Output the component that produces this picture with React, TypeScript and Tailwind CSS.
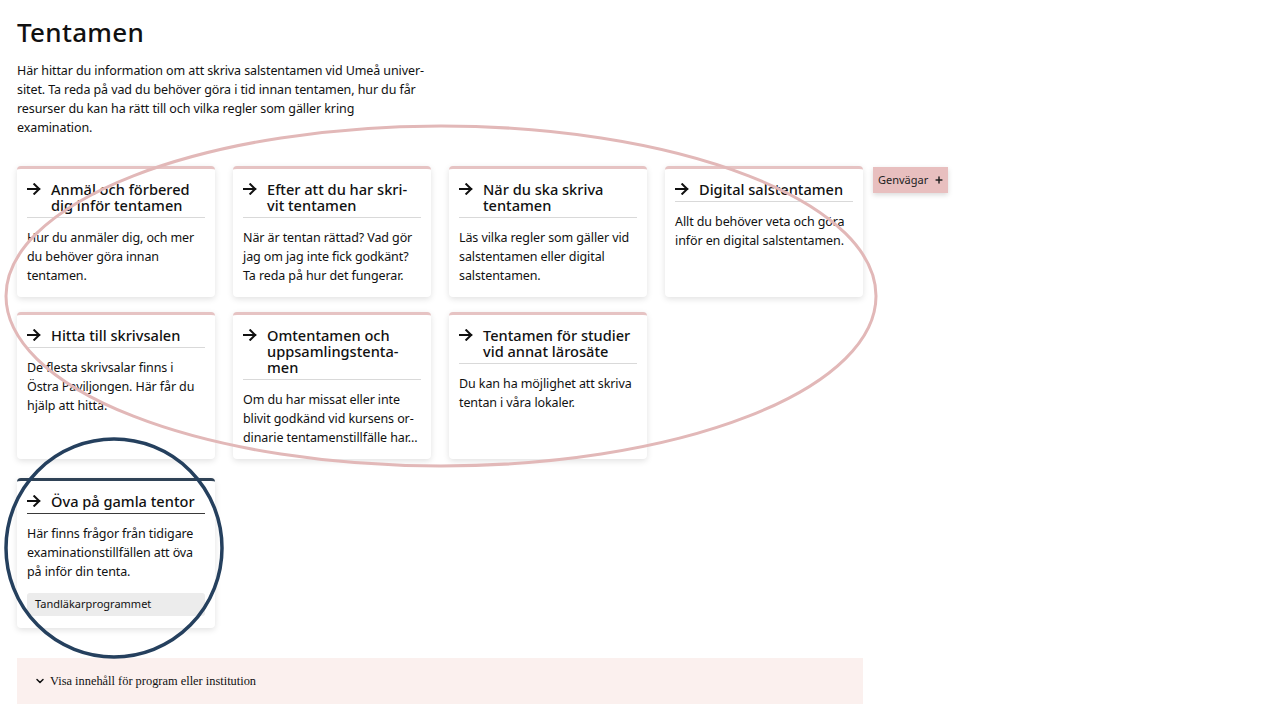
import { ChevronDown, Plus } from "lucide-react";

type Card = {
	title: string[];
	body: string[];
	tag?: string;
	dark?: boolean;
};

const CARDS: Card[] = [
	{
		title: ["Anmäl och förbered", "dig inför tentamen"],
		body: ["Hur du anmäler dig, och mer", "du behöver göra innan", "tentamen."],
	},
	{
		title: ["Efter att du har skri-", "vit tentamen"],
		body: ["När är tentan rättad? Vad gör", "jag om jag inte fick godkänt?", "Ta reda på hur det fungerar."],
	},
	{
		title: ["När du ska skriva", "tentamen"],
		body: ["Läs vilka regler som gäller vid", "salstentamen eller digital", "salstentamen."],
	},
	{
		title: ["Digital salstentamen"],
		body: ["Allt du behöver veta och göra", "inför en digital salstentamen."],
	},
	{
		title: ["Hitta till skrivsalen"],
		body: ["De flesta skrivsalar finns i", "Östra Paviljongen. Här får du", "hjälp att hitta."],
	},
	{
		title: ["Omtentamen och", "uppsamlingstenta-", "men"],
		body: ["Om du har missat eller inte", "blivit godkänd vid kursens or-", "dinarie tentamenstillfälle har..."],
	},
	{
		title: ["Tentamen för studier", "vid annat lärosäte"],
		body: ["Du kan ha möjlighet att skriva", "tentan i våra lokaler."],
	},
];

const LAST: Card = {
	title: ["Öva på gamla tentor"],
	body: ["Här finns frågor från tidigare", "examinationstillfällen att öva", "på inför din tenta."],
	tag: "Tandläkarprogrammet",
	dark: true,
};

// heavier arrow than lucide's, like the site's own
function Arrow() {
	return (
		<svg viewBox="0 0 14 12" className="mt-[2px] h-[12px] w-[14px] shrink-0" fill="none">
			<path
				d="M1 6h11.3M7.3 1.2 12.2 6l-4.9 4.8"
				stroke="currentColor"
				strokeWidth="2"
				strokeLinecap="square"
			/>
		</svg>
	);
}

function LinkCard({ card }: { card: Card }) {
	return (
		<a
			href="#"
			className={
				"flex flex-col rounded-[4px] border-t-[3px] bg-white px-[10px] pb-[12px] pt-[12px] text-[#111] shadow-[0_2px_6px_rgba(0,0,0,0.12)] " +
				(card.dark ? "border-[#2f4256]" : "border-[#e6c3c3]")
			}
		>
			<div
				className={
					"flex gap-x-[10px] border-b pb-[4px] " +
					(card.dark ? "border-[#3a3a3a]" : "border-[#d9d9d9]")
				}
			>
				<Arrow />
				<h2 className="text-[14.6px] font-medium leading-[16px] whitespace-nowrap">
					{card.title.map((line, i) => (
						<span key={i} className="block">
							{line}
						</span>
					))}
				</h2>
			</div>

			<p className="mt-[10px] text-[12.5px] leading-[19px] tracking-[-0.1px] whitespace-nowrap">
				{card.body.map((line, i) => (
					<span key={i} className="block">
						{line}
					</span>
				))}
			</p>

			{card.tag && (
				<div className="mt-[12px] flex h-[23px] items-center rounded-[3px] bg-[#ececec] px-[8px] text-[11px]">
					{card.tag}
				</div>
			)}
		</a>
	);
}

export default function App() {
	return (
		<div
			className="relative h-[720px] w-[1280px] overflow-hidden bg-white text-[#111]"
			style={{ fontFamily: '"Noto Sans", "Open Sans", sans-serif' }}
		>
			<div className="flex items-start gap-x-[10px] px-[17px] pt-[16px]">
				<main className="w-[846px]">
					<h1 className="text-[26px] font-medium leading-[32px] tracking-[0.3px]">Tentamen</h1>

					<p className="mt-[13px] text-[12.5px] leading-[19px] tracking-[-0.1px]">
						Här hittar du information om att skriva salstentamen vid Umeå univer-
						<br />
						sitet. Ta reda på vad du behöver göra i tid innan tentamen, hur du får
						<br />
						resurser du kan ha rätt till och vilka regler som gäller kring
						<br />
						examination.
					</p>

					<div className="mt-[29px] grid grid-cols-4 gap-x-[18px] gap-y-[15px]">
						{CARDS.map((card) => (
							<LinkCard key={card.title.join(" ")} card={card} />
						))}
					</div>

					<div className="mt-[19px] grid grid-cols-4 gap-x-[18px]">
						<LinkCard card={LAST} />
					</div>

					<button
						className="mt-[30px] flex h-[46px] w-full items-center gap-x-[4px] bg-[#fbf0ee] px-[17px] text-left text-[12.4px] text-[#111]"
						style={{ fontFamily: '"Liberation Serif", serif' }}
					>
						<ChevronDown className="h-[12px] w-[12px]" strokeWidth={3} />
						Visa innehåll för program eller institution
					</button>
				</main>

				<aside className="mt-[151px]">
					<button className="flex h-[26px] items-center gap-x-[6px] bg-[#e8bfbf] pl-[5px] pr-[4px] text-[11px] text-[#222] shadow-[0_2px_5px_rgba(0,0,0,0.15)]">
						Genvägar
						<Plus className="h-[10px] w-[10px]" strokeWidth={3.5} />
					</button>
				</aside>
			</div>

			<svg className="pointer-events-none absolute inset-0" width="1280" height="720">
				<ellipse cx="441" cy="296" rx="435" ry="170" fill="none" stroke="#e2b8b8" strokeWidth="3" />
				<ellipse cx="114" cy="548" rx="108" ry="109" fill="none" stroke="#25405e" strokeWidth="3.5" />
			</svg>
		</div>
	);
}
